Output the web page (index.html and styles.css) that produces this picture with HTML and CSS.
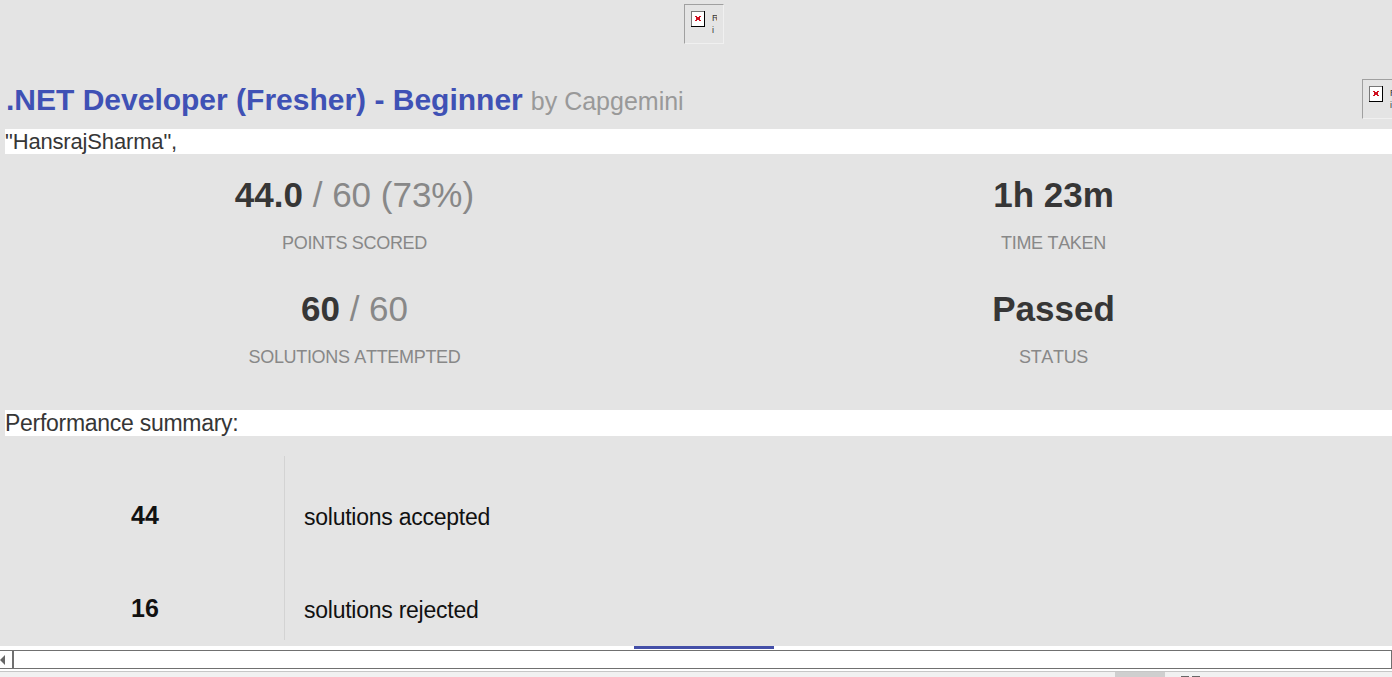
FILE: index.html
```html
<!DOCTYPE html>
<html lang="en">
<head>
<meta charset="utf-8">
<title>Test Report</title>
<link rel="stylesheet" href="styles.css">
</head>
<body>
<main class="report">
  <div class="banner">
    <div class="missing">
      <svg class="missing-icon" width="15" height="16" viewBox="0 0 15 16" shape-rendering="crispEdges"><path fill="#fff" d="M0 0h14v15H0z"/><path fill="#777" d="M0 0h14v1H0zM0 0h1v15H0z"/><path fill="#000" d="M13 0h1v16h-1zM0 15h14v1H0z"/><path fill="#cf1020" d="M4 5h2v1H4zM8 5h2v1H8zM5 6h4v1H5zM5 7h4v1H5zM5 8h4v1H5zM4 9h2v1H4zM8 9h2v1H8z"/></svg>
      <span class="missing-alt">R<br>i</span>
    </div>
  </div>
  <header class="heading">
    <h1 class="title">.NET Developer (Fresher) - Beginner</h1>
    <span class="company">by Capgemini</span>
    <div class="missing missing-end">
      <svg class="missing-icon" width="15" height="16" viewBox="0 0 15 16" shape-rendering="crispEdges"><path fill="#fff" d="M0 0h14v15H0z"/><path fill="#777" d="M0 0h14v1H0zM0 0h1v15H0z"/><path fill="#000" d="M13 0h1v16h-1zM0 15h14v1H0z"/><path fill="#cf1020" d="M4 5h2v1H4zM8 5h2v1H8zM5 6h4v1H5zM5 7h4v1H5zM5 8h4v1H5zM4 9h2v1H4zM8 9h2v1H8z"/></svg>
      <span class="missing-alt">R<br>i</span>
    </div>
  </header>
  <p class="strip strip-name">"HansrajSharma",</p>
  <section class="stats">
    <div class="stat"><div class="value">44.0<span class="total"> / 60 (73%)</span></div><div class="label">POINTS SCORED</div></div>
    <div class="stat"><div class="value">1h 23m</div><div class="label">TIME TAKEN</div></div>
    <div class="stat"><div class="value">60<span class="total"> / 60</span></div><div class="label">SOLUTIONS ATTEMPTED</div></div>
    <div class="stat"><div class="value">Passed</div><div class="label">STATUS</div></div>
  </section>
  <p class="strip strip-summary">Performance summary:</p>
  <section class="summary">
    <div class="count">44</div><div class="outcome">solutions accepted</div>
    <div class="count">16</div><div class="outcome">solutions rejected</div>
  </section>
</main>
<div class="edge"><div class="button-top"></div></div>
<div class="scrollbar">
  <div class="arrow"><svg width="5" height="10" viewBox="0 0 5 10"><path fill="#666" d="M0 5L5 0v10z"/></svg></div>
  <div class="thumb"></div>
</div>
<footer class="taskbar"><div class="task"></div><div class="mark"></div><div class="mark"></div></footer>
</body>
</html>
```
FILE: styles.css
```css
* { box-sizing: border-box; }
body {
  margin: 0;
  width: 1392px;
  height: 677px;
  overflow: hidden;
  background: #fff;
  color: #363636;
  font-family: "Liberation Sans", Arial, sans-serif;
}
.report { height: 646px; background: #e4e4e4; overflow: hidden; }
.banner { height: 79px; padding: 4px 0 0 684px; }
.missing {
  display: flex;
  flex: none;
  gap: 6px;
  width: 40px;
  height: 40px;
  padding: 6px 0 0 6px;
  border: 1px solid #a0a0a0;
  border-right-color: #f0f0f0;
  border-bottom-color: #f0f0f0;
  overflow: hidden;
}
.missing-icon { flex: none; }
.missing-alt { width: 5px; margin-top: 1px; overflow: hidden; font-size: 9px; line-height: 12px; }
.heading { display: flex; align-items: flex-start; height: 50px; padding-left: 6px; }
.title { margin: 4px 8px 0 0; color: #3f51b5; font-size: 30px; line-height: 34px; white-space: nowrap; }
.company { margin-top: 8px; color: #999; font-size: 25px; line-height: 29px; white-space: nowrap; }
.missing-end { width: 30px; margin-left: auto; border-right: 0; }
.strip { margin: 0 0 0 5px; background: #fff; }
.strip-name { height: 25px; font-size: 22px; line-height: 25px; letter-spacing: -0.16px; }
.strip-summary { height: 26px; font-size: 23px; line-height: 26px; letter-spacing: -0.28px; }
.stats {
  display: grid;
  grid-template-columns: 699px 699px;
  grid-template-rows: 114px 114px;
  height: 256px;
  padding: 20px 0 0 5px;
}
.stat { text-align: center; }
.value { font-size: 35px; font-weight: bold; line-height: 42px; }
.total { color: #888; font-weight: normal; white-space: pre; }
.label { margin-top: 16px; color: #888; font-size: 18px; line-height: 22px; letter-spacing: -0.32px; font-kerning: none; }
.summary {
  display: grid;
  grid-template-columns: 280px 1fr;
  grid-template-rows: 93px 91px;
  margin: 20px 0 0 5px;
  color: #111;
}
.count { padding: 45px 0 0 1px; border-right: 1px solid #d3d3d3; text-align: center; font-size: 25px; font-weight: bold; line-height: 29px; }
.outcome { padding: 48px 0 0 19px; font-size: 23px; line-height: 26px; letter-spacing: -0.25px; }
.edge { height: 4px; padding-left: 634px; }
.button-top { width: 140px; height: 3px; background: #444fa8; }
.scrollbar { display: flex; height: 19px; border: solid #707070; border-width: 1px 1px 1px 0; }
.arrow { display: flex; align-items: center; width: 12px; }
.thumb { flex: 1; border-left: 2px solid #707070; }
.taskbar { display: flex; height: 6px; margin-top: 2px; padding-left: 1115px; border-top: 1px solid #c6c6c6; background: #f1f1f1; }
.task { width: 50px; margin-right: 15px; background: #cfcfcf; }
.mark { width: 8px; height: 1px; margin: 4px 2px 0 1px; background: #666; }
```
